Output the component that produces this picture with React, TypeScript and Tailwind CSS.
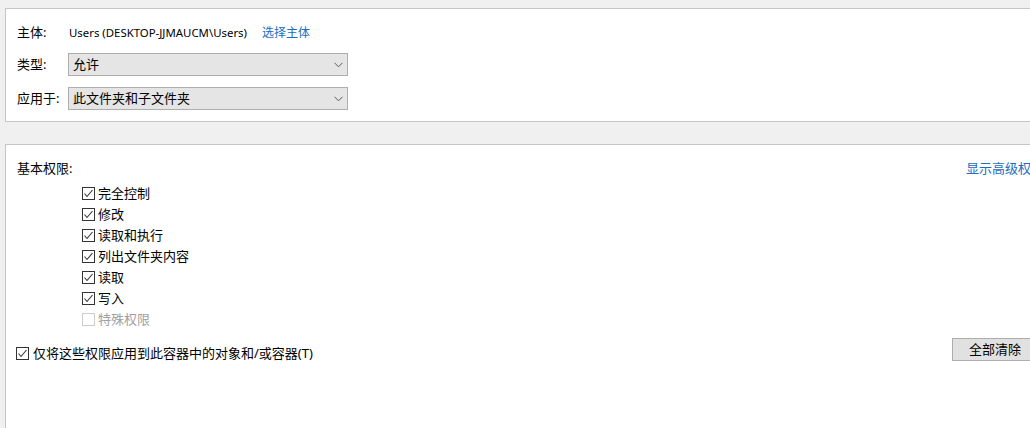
import React from 'react';

const FONT = '"Segoe UI", "Noto Sans", "Noto Sans CJK SC", sans-serif';

function CheckBox({ checked = true, disabled = false }: { checked?: boolean; disabled?: boolean }) {
  return (
    <svg width="13" height="13" viewBox="0 0 13 13" className="shrink-0">
      <rect
        x="0.5"
        y="0.5"
        width="12"
        height="12"
        fill="#fff"
        stroke={disabled ? '#cccccc' : '#333333'}
      />
      {checked && (
        <polyline
          points="2.5,6.5 5,9.5 10.5,3"
          fill="none"
          stroke="#333333"
          strokeWidth="1.1"
        />
      )}
    </svg>
  );
}

function Chevron() {
  return (
    <svg width="9" height="6" viewBox="0 0 9 6" className="shrink-0">
      <polyline points="0.5,0.8 4.5,4.8 8.5,0.8" fill="none" stroke="#5a5a5a" strokeWidth="1" />
    </svg>
  );
}

function Select({ value }: { value: string }) {
  return (
    <div className="w-[280px] h-[23px] flex items-center justify-between bg-[#e5e5e5] border border-[#adadad] pl-[4px] pr-[4px]">
      <span className="text-[13px] text-black leading-none">{value}</span>
      <Chevron />
    </div>
  );
}

const perms: { label: string; checked: boolean; disabled?: boolean }[] = [
  { label: '完全控制', checked: true },
  { label: '修改', checked: true },
  { label: '读取和执行', checked: true },
  { label: '列出文件夹内容', checked: true },
  { label: '读取', checked: true },
  { label: '写入', checked: true },
  { label: '特殊权限', checked: false, disabled: true },
];

export default function App() {
  return (
    <div
      className="w-[1030px] h-[428px] overflow-hidden bg-[#f0f0f0] pt-[8px] pl-[5px]"
      style={{ fontFamily: FONT }}
    >
      {/* Principal / type / applies-to */}
      <div className="w-[1040px] h-[114px] bg-white border-l border-t border-b border-[#c4c4c4] pt-[13px] pl-[11px]">
        <div className="flex items-center h-[22px]">
          <span className="w-[52px] text-[13px]">主体:</span>
          <span className="text-[11.4px] text-black">Users (DESKTOP-JJMAUCM\Users)</span>
          <span className="ml-[15px] text-[12px] text-[#1a6dc2]">选择主体</span>
        </div>
        <div className="flex items-center mt-[9px]">
          <span className="w-[51px] text-[13px]">类型:</span>
          <Select value="允许" />
        </div>
        <div className="flex items-center mt-[11px]">
          <span className="w-[51px] text-[13px]">应用于:</span>
          <Select value="此文件夹和子文件夹" />
        </div>
      </div>

      {/* Basic permissions */}
      <div className="mt-[22px] w-[1040px] h-[300px] bg-white border-l border-t border-[#c4c4c4] pl-[11px]">
        <div className="flex items-center justify-between h-[16px] mt-[15px]">
          <span className="text-[13px] leading-none">基本权限:</span>
          <span className="text-[13px] leading-none text-[#1a6dc2] w-[79px] whitespace-nowrap">显示高级权限</span>
        </div>
        <div className="mt-[7px] pl-[65px] flex flex-col">
          {perms.map((p) => (
            <div key={p.label} className="h-[21px] flex items-center gap-[3px]">
              <CheckBox checked={p.checked} disabled={p.disabled} />
              <span className={`text-[13px] leading-none ${p.disabled ? 'text-[#a0a0a0]' : 'text-black'}`}>
                {p.label}
              </span>
            </div>
          ))}
        </div>
        <div className="flex items-start justify-between mt-[8px]">
          <div className="flex items-center h-[23px] mt-[4px] gap-[4px] -ml-[1px]">
            <CheckBox checked />
            <span className="text-[13px] leading-none">仅将这些权限应用到此容器中的对象和/或容器(T)</span>
          </div>
          <div className="w-[86px] h-[23px] mr-[7px] bg-[#e1e1e1] border border-[#adadad] flex items-center justify-center text-[13px]">
            全部清除
          </div>
        </div>
      </div>
    </div>
  );
}
